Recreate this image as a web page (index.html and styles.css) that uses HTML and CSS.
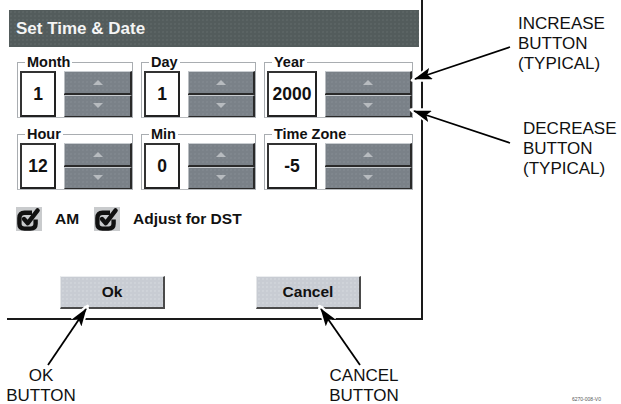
FILE: index.html
```html
<!DOCTYPE html>
<html lang="en">

<head>
    <meta charset="UTF-8">
    <meta name="viewport" content="width=device-width, initial-scale=1.0">
    <title>Set Time &amp; Date</title>
    <link rel="stylesheet" href="styles.css">
</head>

<body>
    <div class="figure">
        <div class="screen">
            <div class="titlebar">Set Time &amp; Date</div>

            <div class="fields">
                <fieldset class="group">
                    <legend>Month</legend>
                    <div class="value">1</div>
                    <div class="spinner">
                        <button class="spin up"></button>
                        <button class="spin down"></button>
                    </div>
                </fieldset>
                <fieldset class="group">
                    <legend>Day</legend>
                    <div class="value">1</div>
                    <div class="spinner">
                        <button class="spin up"></button>
                        <button class="spin down"></button>
                    </div>
                </fieldset>
                <fieldset class="group">
                    <legend>Year</legend>
                    <div class="value wide">2000</div>
                    <div class="spinner">
                        <button class="spin up"></button>
                        <button class="spin down"></button>
                    </div>
                </fieldset>
                <fieldset class="group">
                    <legend>Hour</legend>
                    <div class="value">12</div>
                    <div class="spinner">
                        <button class="spin up"></button>
                        <button class="spin down"></button>
                    </div>
                </fieldset>
                <fieldset class="group">
                    <legend>Min</legend>
                    <div class="value">0</div>
                    <div class="spinner">
                        <button class="spin up"></button>
                        <button class="spin down"></button>
                    </div>
                </fieldset>
                <fieldset class="group">
                    <legend>Time Zone</legend>
                    <div class="value wide">-5</div>
                    <div class="spinner">
                        <button class="spin up"></button>
                        <button class="spin down"></button>
                    </div>
                </fieldset>
            </div>

            <div class="checks">
                <label class="check">
                    <span class="box">
                        <svg width="26" height="24" viewBox="0 0 26 24">
                            <path d="M16 5.8 H8.5 Q3.4 5.8 3.4 11 V16.8 Q3.4 21.6 8.5 21.6 H14.5 Q19.6 21.6 19.6 16.8 V12.5" fill="none" stroke="#111" stroke-width="4.4" />
                            <path d="M8 12 L11.8 16.2 L21.6 3.4" fill="none" stroke="#111" stroke-width="4.4" stroke-linecap="round" stroke-linejoin="round" />
                        </svg>
                    </span>
                    AM
                </label>
                <label class="check">
                    <span class="box">
                        <svg width="26" height="24" viewBox="0 0 26 24">
                            <path d="M16 5.8 H8.5 Q3.4 5.8 3.4 11 V16.8 Q3.4 21.6 8.5 21.6 H14.5 Q19.6 21.6 19.6 16.8 V12.5" fill="none" stroke="#111" stroke-width="4.4" />
                            <path d="M8 12 L11.8 16.2 L21.6 3.4" fill="none" stroke="#111" stroke-width="4.4" stroke-linecap="round" stroke-linejoin="round" />
                        </svg>
                    </span>
                    Adjust for DST
                </label>
            </div>

            <div class="actions">
                <button class="btn">Ok</button>
                <button class="btn">Cancel</button>
            </div>
        </div>

        <!-- callout arrows -->
        <svg class="arrows" width="621" height="404" viewBox="0 0 621 404">
            <defs>
                <marker id="head" markerUnits="userSpaceOnUse" viewBox="0 0 18 12" markerWidth="18" markerHeight="12" refX="17" refY="6" orient="auto">
                    <path d="M0 0 L18 6 L0 12 L4 6 Z" fill="#000" />
                </marker>
                <marker id="halo" markerUnits="userSpaceOnUse" viewBox="-3 -3 24 18" markerWidth="24" markerHeight="18" refX="17" refY="6" orient="auto">
                    <path d="M0 0 L18 6 L0 12 L4 6 Z" fill="#fff" stroke="#fff" stroke-width="3" stroke-linejoin="round" />
                </marker>
            </defs>
            <g stroke="#fff" stroke-width="5" marker-end="url(#halo)">
                <line x1="510" y1="47" x2="413" y2="80" />
                <line x1="510" y1="143" x2="412" y2="110" />
                <line x1="48" y1="365" x2="87" y2="307" />
                <line x1="360" y1="365" x2="320" y2="307" />
            </g>
            <g stroke="#000" stroke-width="1.8" marker-end="url(#head)">
                <line x1="510" y1="47" x2="415" y2="79" />
                <line x1="510" y1="143" x2="414" y2="111" />
                <line x1="48" y1="365" x2="86" y2="309" />
                <line x1="360" y1="365" x2="321" y2="309" />
            </g>
        </svg>

        <div class="callout increase">INCREASE<br>BUTTON<br>(TYPICAL)</div>
        <div class="callout decrease">DECREASE<br>BUTTON<br>(TYPICAL)</div>
        <div class="callout ok-label">OK<br>BUTTON</div>
        <div class="callout cancel-label">CANCEL<br>BUTTON</div>
        <div class="fig-id">6270-008-V0</div>
    </div>
</body>

</html>
```

FILE: styles.css
```css
body {
    margin: 0;
    font-family: "Liberation Sans", Arial, sans-serif;
    background: #fff;
    color: #111;
}

.figure {
    position: relative;
    width: 621px;
    height: 404px;
    overflow: hidden;
}

.screen {
    margin-left: 7px;
    width: 414px;
    height: 318px;
    border-right: 2px solid #1a1a1a;
    border-bottom: 2px solid #1a1a1a;
    display: flex;
    flex-direction: column;
}

.titlebar {
    margin: 10px 2px 0 2px;
    height: 37px;
    line-height: 37px;
    padding-left: 7px;
    background-color: #535c5c;
    background-image: radial-gradient(rgba(255, 255, 255, 0.07) 0.6px, transparent 0.9px);
    background-size: 4px 4px;
    color: #f4f4f4;
    font-size: 17px;
    font-weight: bold;
}

.fields {
    margin-top: 8px;
    padding-left: 10px;
    display: grid;
    grid-template-columns: 116px 115px 149px;
    column-gap: 8px;
    row-gap: 9px;
}

.group {
    margin: 0;
    padding: 2px 0 0 2px;
    border: 1px solid #a9adb1;
    border-bottom-color: #b8bbbe;
    display: flex;
    gap: 8px;
    min-width: 0;
}

.group legend {
    margin-left: 5px;
    padding: 0 2px;
    font-size: 14.5px;
    font-weight: bold;
    line-height: 14px;
}

.value {
    box-sizing: border-box;
    width: 36px;
    height: 46px;
    border: 2px solid #333;
    border-right-color: #222;
    border-bottom-color: #222;
    background: #fff;
    display: flex;
    align-items: center;
    justify-content: center;
    font-size: 17.5px;
    font-weight: bold;
}

.value.wide {
    width: 50px;
}

.spinner {
    flex: 1;
    display: flex;
    flex-direction: column;
    gap: 1px;
    background: #2a2a2a;
    height: 46px;
}

.spin {
    flex: 1;
    margin: 0;
    padding: 0;
    box-sizing: border-box;
    border-top: 1px solid #c9cdd1;
    border-left: 1px solid #b9bdc1;
    border-right: 2px solid #2a2a2a;
    border-bottom: 1px solid #2a2a2a;
    background-color: #7a8188;
    background-image: radial-gradient(rgba(255, 255, 255, 0.07) 0.6px, transparent 0.9px);
    background-size: 4px 4px;
    display: flex;
    align-items: center;
    justify-content: center;
}

.spin::after {
    content: "";
    border-left: 5px solid transparent;
    border-right: 5px solid transparent;
}

.spin.up::after {
    border-bottom: 5px solid #b7bbbf;
}

.spin.down::after {
    border-top: 5px solid #b7bbbf;
}

.checks {
    margin-top: 17px;
    padding-left: 9px;
    display: flex;
    gap: 15px;
}

.check {
    display: flex;
    align-items: center;
    gap: 13px;
    font-size: 15.5px;
    font-weight: bold;
}

.box {
    width: 26px;
    height: 24px;
    background: #c9cbcd;
    display: block;
}

.box svg {
    display: block;
}

.actions {
    margin-top: 45px;
    padding-left: 53px;
    display: flex;
    gap: 91px;
}

.btn {
    box-sizing: border-box;
    width: 105px;
    height: 33px;
    margin: 0;
    padding: 0;
    border-top: 1px solid #eceef0;
    border-left: 1px solid #e4e6e8;
    border-right: 2px solid #4a4a4a;
    border-bottom: 2px solid #4a4a4a;
    background-color: #c8ccd3;
    background-image: radial-gradient(rgba(255, 255, 255, 0.2) 0.6px, transparent 0.9px);
    background-size: 4px 4px;
    font-family: "Liberation Sans", Arial, sans-serif;
    font-size: 15.5px;
    font-weight: bold;
    color: #111;
}

.arrows {
    position: absolute;
    left: 0;
    top: 0;
}

.callout {
    position: absolute;
    font-size: 17px;
    line-height: 20px;
    color: #111;
}

.increase {
    left: 518px;
    top: 14px;
}

.decrease {
    left: 523px;
    top: 119px;
}

.ok-label {
    left: 5px;
    top: 366px;
    width: 72px;
    text-align: center;
}

.cancel-label {
    left: 328px;
    top: 366px;
    width: 72px;
    text-align: center;
}

.fig-id {
    position: absolute;
    left: 572px;
    top: 396px;
    font-size: 5px;
    color: #555;
}
```
